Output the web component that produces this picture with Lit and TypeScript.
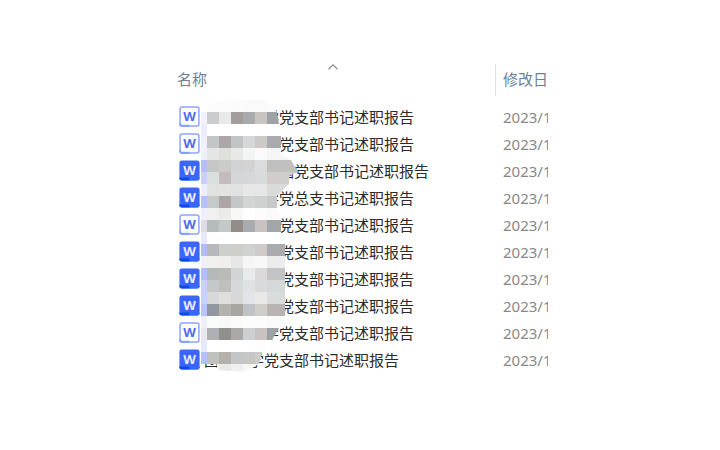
import { LitElement, html, svg, css } from "lit";
import { customElement, property } from "lit/decorators.js";

type FileItem = { name: string; solid: boolean; date: string };

const tail = "党支部书记述职报告";
const files: FileItem[] = [
  { name: "　　　　学" + tail, solid: false, date: "2023/11" },
  { name: "　　　　　" + tail, solid: false, date: "2023/11" },
  { name: "　　　　　园" + tail, solid: true, date: "2023/11" },
  { name: "　　　　学党总支书记述职报告", solid: true, date: "2023/11" },
  { name: "　　　　　" + tail, solid: false, date: "2023/11" },
  { name: "　　　　　" + tail, solid: true, date: "2023/11" },
  { name: "　　　　　" + tail, solid: true, date: "2023/11" },
  { name: "　　　　　" + tail, solid: true, date: "2023/11" },
  { name: "　　　　学" + tail, solid: false, date: "2023/11" },
  { name: "团　　学" + tail, solid: true, date: "2023/11" },
];

// Mosaic tiles: each line is a 12px band, first tile 6px wide, last one runs to the edge.
const tiles = [
  "ffffff fcfcfc fcfcfc fbfbfb fafafa fafafa fbfbfb",
  "f0f1ff cacccd e9eae9 a39d9b a8aaac c9c3c2 a0a3a6",
  "eaedff ffffff ffffff ffffff ffffff ffffff ffffff",
  "f0f0fd c3c6c6 ada6a6 bfc4c4 d5d7d8 cdc9c7 a9abae",
  "f0f0fb e4e6e3 dfdfdc e6e9e6 f3f5f4 fafafa f5f5f5",
  "b5bff2 c6c8c8 cbcbca d1d3d3 d2d4d4 dbdcdc c0c0be",
  "c8d0f8 dcdfdf c4bcbc d4d6d7 d4d8d8 d8dbdb d0cdca",
  "eceefc e0e2e0 e3e3e0 dfe2e1 e6e8e8 e5e7e7 d9dbdb",
  "b4c0f6 c5c9ca aea5a6 c3c7c8 d3d5d5 cfd0d0 c8c8c8",
  "f0f0fd f0f1ee ebebe8 f8f9f6 ffffff fcfcfc fafafa",
  "e0dbe8 b5bbbd c4c8c7 938c89 a9abae c8c2c1 a3a6a8",
  "e6e9ff ffffff ffffff ffffff ffffff ffffff ffffff",
  "b4bcf5 b5b9bb cdcfcb cfcfca d0d1d1 d0cac8 a9abae",
  "f0f0fb f0f1ef f0efed e5e8e7 f6f6f6 f8f8f8 ececec",
  "b3bdf8 b5b9ba bbbbb6 d2d5d6 e8eaeb dcd9d8 c1c3c5",
  "cad1fa c4c8ca c0c0ba d6d9d9 dfe1e3 d9dadc d5d8d8",
  "c8d1fa d5d9d8 dfdeda d7d9d9 e1e4e8 ebe9e6 dadcdc",
  "b8c4fb 92979f b4b2af a7a6a3 c0c3c6 d1cdca b9b4b3",
  "f0f0fb fafafa f8f8f8 fafafa fcfcfc fcfcfc fafafa",
  "e9e8f0 aeb0b3 918f8c aaa9a7 cdd0d2 c8c2c0 9da1a3",
  "e6e9ff ffffff ffffff ffffff ffffff fdfdfd ffffff",
  "b4c0fa c0c0be b4b0ac c3c6c7 c6c6c6 cbcbca c4c4c4",
  "ffffff ffffff e8e9e8 f0f0ef f7f7f7 fdfdfd ffffff",
].map((line) => line.split(" "));

@customElement("doc-icon")
export class DocIcon extends LitElement {
  @property({ type: Boolean }) solid = false;

  static styles = css`
    :host { display: block; width: 21px; height: 21px; }
    svg { display: block; }
    .letter { font: bold 13px "Noto Sans", sans-serif; text-anchor: middle; }
  `;

  render() {
    return html`<svg width="21" height="21" viewBox="0 0 21 21" aria-hidden="true">
      ${this.solid
        ? svg`<rect x="0.4" y="0.4" width="20.2" height="20.2" rx="2.4" fill="#3c66fb"/>
            <path d="M.4 17.6H10.5V20.6H2.8A2.4 2.4 0 0 1 .4 18.2z" fill="#0c4be6"/>
            <path d="M10.5 17.6H20.6V18.2A2.4 2.4 0 0 1 18.2 20.6H10.5z" fill="#2f6cff"/>`
        : svg`<rect x="1.1" y="1.1" width="18.8" height="18.8" rx="2" fill="#fff" stroke="#8fa4ff" stroke-width="1.5"/>
            <path d="M2 18.2H10.5" stroke="#dbe2ff" stroke-width="1"/>
            <path d="M1.1 17V18Q1.1 19.9 3 19.9H10.5" fill="none" stroke="#7c97ff" stroke-width="1.5"/>`}
      <text class="letter" x="10.5" y="15" fill=${this.solid ? "#e9eeff" : "#4c6cf0"}>W</text>
    </svg>`;
  }
}

@customElement("app-root")
export class AppRoot extends LitElement {
  static styles = css`
    :host {
      display: block;
      min-height: 100vh;
      background: #fff;
      font: 15px/27px "Noto Sans", "Noto Sans CJK SC", sans-serif;
      color: #2b2b2b;
    }
    .pane { padding: 64px 172px 64px 177px; }
    .list { position: relative; }
    table { width: 100%; border-collapse: collapse; table-layout: fixed; }
    th, td { padding: 0; text-align: left; font-weight: normal; white-space: pre; overflow: hidden; }
    .date-col { width: 53px; }
    .head { height: 40px; vertical-align: top; color: #6d7f98; }
    .label { display: block; height: 32px; line-height: 30px; }
    .name-head { position: relative; }
    .sort { position: absolute; left: 150px; top: 0; }
    .date-head .label { border-left: 1px solid #e2e4e8; padding-left: 7px; }
    td { height: 27px; }
    .file { display: flex; align-items: center; gap: 4px; height: 27px; padding-left: 2px; }
    .file doc-icon { margin-bottom: 2px; flex: none; }
    .date { padding-left: 8px; color: #888; }
    .mosaic { position: absolute; left: 24px; top: 36px; }
  `;

  private renderMosaic() {
    return html`<svg class="mosaic" width="97" height="276" viewBox="0 0 97 276" shape-rendering="crispEdges" aria-hidden="true">
      <defs>
        <clipPath id="brush">
          <path d="M0 8 12 3 30 0H66L76 12 78 24 80 36V55L90 60 97 72 88 76V84L76 96V108L80 120V144H84V228H78L71 240 70 252H61L58 264 42 272 16 270V264H0z"/>
        </clipPath>
      </defs>
      <g clip-path="url(#brush)">
        ${tiles.map((band, r) =>
          band.map((c, i) => svg`<rect x=${i ? i * 12 - 6 : 0} y=${r * 12} width=${i === 0 ? 6 : i === 6 ? 31 : 12} height="12" fill=${"#" + c}/>`)
        )}
      </g>
    </svg>`;
  }

  render() {
    return html`<main class="pane">
      <div class="list">
        <table>
          <colgroup><col /><col class="date-col" /></colgroup>
          <thead>
            <tr>
              <th class="head name-head" scope="col" aria-sort="ascending"><span class="label">名称</span><svg class="sort" width="12" height="6" viewBox="0 0 12 6" aria-hidden="true"><path d="M1.5 5.2 6 .9 10.5 5.2" fill="none" stroke="#8a8a8a" stroke-width="1.2"/></svg></th>
              <th class="head date-head" scope="col"><span class="label">修改日期</span></th>
            </tr>
          </thead>
          <tbody>
            ${files.map((f) => html`<tr>
              <td><div class="file"><doc-icon ?solid=${f.solid}></doc-icon><span>${f.name}</span></div></td>
              <td class="date">${f.date}</td>
            </tr>`)}
          </tbody>
        </table>
        ${this.renderMosaic()}
      </div>
    </main>`;
  }
}
